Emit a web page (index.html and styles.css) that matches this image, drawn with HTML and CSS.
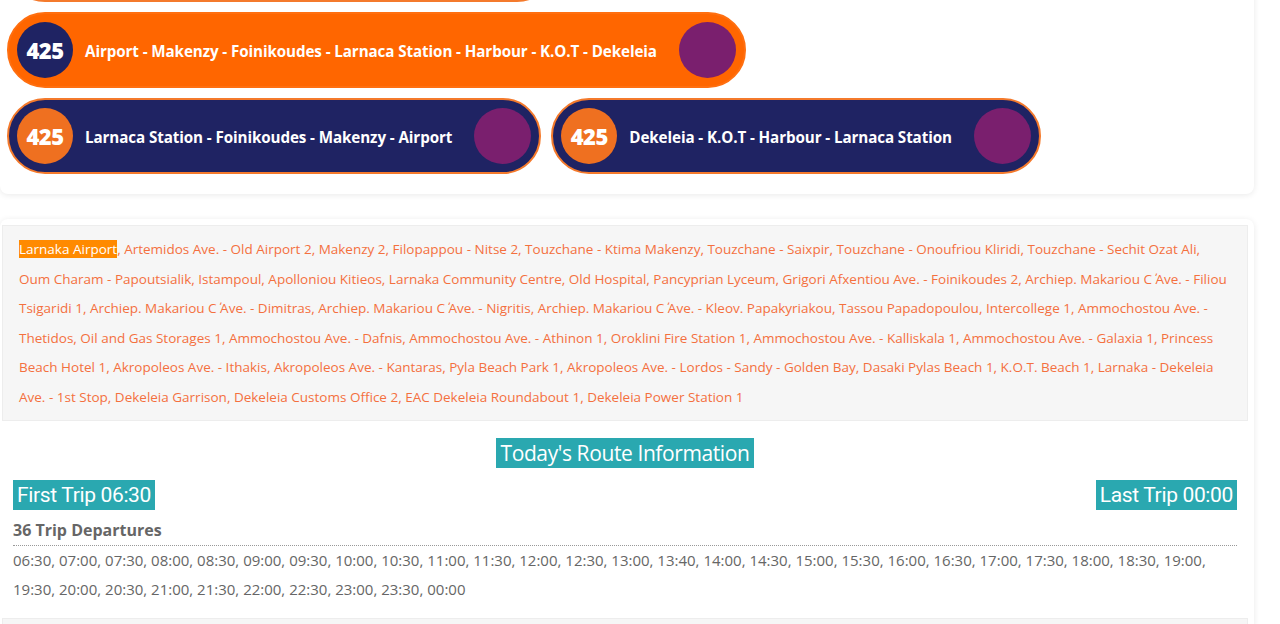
FILE: index.html
```html
<!DOCTYPE html>
<html lang="en">
<head>
    <meta charset="UTF-8">
    <meta name="viewport" content="width=device-width, initial-scale=1.0">
    <title>Route 425</title>
    <link rel="stylesheet" href="styles.css">
</head>
<body>
    <div class="card routes">
        <div class="route-row">
            <div class="route dark prev"></div>
        </div>
        <div class="route-row">
            <div class="route light">
                <span class="num">425</span>
                <span class="name">Airport - Makenzy - Foinikoudes - Larnaca Station - Harbour - K.O.T - Dekeleia</span>
                <span class="dot"></span>
            </div>
        </div>
        <div class="route-row">
            <div class="route dark">
                <span class="num">425</span>
                <span class="name">Larnaca Station - Foinikoudes - Makenzy - Airport</span>
                <span class="dot"></span>
            </div>
            <div class="route dark">
                <span class="num">425</span>
                <span class="name">Dekeleia - K.O.T - Harbour - Larnaca Station</span>
                <span class="dot"></span>
            </div>
        </div>
    </div>

    <div class="card info">
        <div class="stops">
            <span class="stop current">Larnaka Airport</span>, Artemidos Ave. - Old Airport 2, Makenzy 2, Filopappou - Nitse 2, Touzchane - Ktima Makenzy, Touzchane - Saixpir, Touzchane - Onoufriou Kliridi, Touzchane - Sechit Ozat Ali, Oum Charam - Papoutsialik, Istampoul, Apolloniou Kitieos, Larnaka Community Centre, Old Hospital, Pancyprian Lyceum, Grigori Afxentiou Ave. - Foinikoudes 2, Archiep. Makariou C΄ Ave. - Filiou Tsigaridi 1, Archiep. Makariou C΄ Ave. - Dimitras, Archiep. Makariou C΄ Ave. - Nigritis, Archiep. Makariou C΄ Ave. - Kleov. Papakyriakou, Tassou Papadopoulou, Intercollege 1, Ammochostou Ave. - Thetidos, Oil and Gas Storages 1, Ammochostou Ave. - Dafnis, Ammochostou Ave. - Athinon 1, Oroklini Fire Station 1, Ammochostou Ave. - Kalliskala 1, Ammochostou Ave. - Galaxia 1, Princess Beach Hotel 1, Akropoleos Ave. - Ithakis, Akropoleos Ave. - Kantaras, Pyla Beach Park 1, Akropoleos Ave. - Lordos - Sandy - Golden Bay, Dasaki Pylas Beach 1, K.O.T. Beach 1, Larnaka - Dekeleia Ave. - 1st Stop, Dekeleia Garrison, Dekeleia Customs Office 2, EAC Dekeleia Roundabout 1, Dekeleia Power Station 1
        </div>

        <div class="today">
            <h3 class="tag title">Today's Route Information</h3>
            <div class="trip-ends">
                <span class="tag trip">First Trip 06:30</span>
                <span class="tag trip">Last Trip 00:00</span>
            </div>
            <h4 class="count">36 Trip Departures</h4>
            <p class="times">06:30, 07:00, 07:30, 08:00, 08:30, 09:00, 09:30, 10:00, 10:30, 11:00, 11:30, 12:00, 12:30, 13:00, 13:40, 14:00, 14:30, 15:00, 15:30, 16:00, 16:30, 17:00, 17:30, 18:00, 18:30, 19:00, 19:30, 20:00, 20:30, 21:00, 21:30, 22:00, 22:30, 23:00, 23:30, 00:00</p>
        </div>

        <div class="stops next"></div>
    </div>
</body>
</html>
```

FILE: styles.css
```css
body {
    margin: 0;
    background-color: #fff;
    font-family: "Open Sans", "Liberation Sans", sans-serif;
    overflow: hidden;
}
.card {
    width: 1254px;
    background-color: #fff;
    border-radius: 0 0 8px 8px;
    box-shadow: 0 1px 6px rgba(0, 0, 0, 0.09);
}
.routes {
    margin-top: -74px;
    padding: 0 0 20px 7px;
    box-sizing: border-box;
    display: flex;
    flex-direction: column;
    gap: 10px;
}
.route-row {
    display: flex;
    gap: 10px;
}
.route {
    display: flex;
    align-items: center;
    height: 76px;
    box-sizing: border-box;
    padding: 0 8px;
    border: 2px solid #f47a2c;
    border-radius: 40px;
    color: #fff;
}
.route.prev {
    width: 548px;
}
.route.light {
    background-color: #ff6600;
    border-color: #ff6f10;
}
.route.dark {
    background-color: #1f2363;
}
.num {
    width: 56px;
    height: 56px;
    border-radius: 50%;
    display: flex;
    align-items: center;
    justify-content: center;
    font-size: 22px;
    font-weight: 800;
    letter-spacing: -0.5px;
}
.light .num {
    background-color: #1f2363;
}
.dark .num {
    background-color: #ef7020;
}
.name {
    margin: 2px 22px 0 12px;
    font-size: 15.2px;
    font-weight: 700;
    letter-spacing: -0.1px;
}
.dot {
    width: 57px;
    height: 56px;
    border-radius: 50%;
    background-color: #7a1f6e;
}

.info {
    margin-top: 25px;
    border-radius: 8px 8px 0 0;
    padding: 6px 6px 0 2px;
    box-sizing: border-box;
    height: 408px;
    overflow: hidden;
}
.stops {
    background-color: #f6f6f6;
    border: 1px solid #ededed;
    padding: 9px 16px 7px;
    font-size: 13.5px;
    line-height: 29.6px;
    color: #f4703e;
}
.stop.current {
    background-color: #ff8a00;
    color: #fff;
}
.today {
    padding: 17px 11px 14px 11px;
    color: #666;
}
.tag {
    display: inline-block;
    background-color: #2aa8b0;
    color: #fff;
    font-weight: 400;
    margin: 0;
}
.title {
    display: block;
    width: max-content;
    margin: 0 auto;
    padding: 0 5px;
    font-size: 21px;
    line-height: 30px;
    letter-spacing: -0.4px;
}
.trip-ends {
    display: flex;
    justify-content: space-between;
    margin-top: 12px;
}
.trip {
    padding: 0 4px;
    font-family: Roboto, "Liberation Sans", sans-serif;
    font-size: 21px;
    line-height: 30px;
    letter-spacing: -0.35px;
}
.count {
    margin: 10px 0 0;
    padding-bottom: 5px;
    border-bottom: 1px dotted #999;
    font-size: 16px;
    line-height: 20px;
    font-weight: 700;
}
.times {
    margin: 0;
    font-size: 15px;
    line-height: 29px;
}
.stops.next {
    height: 20px;
    padding: 0;
}
```
